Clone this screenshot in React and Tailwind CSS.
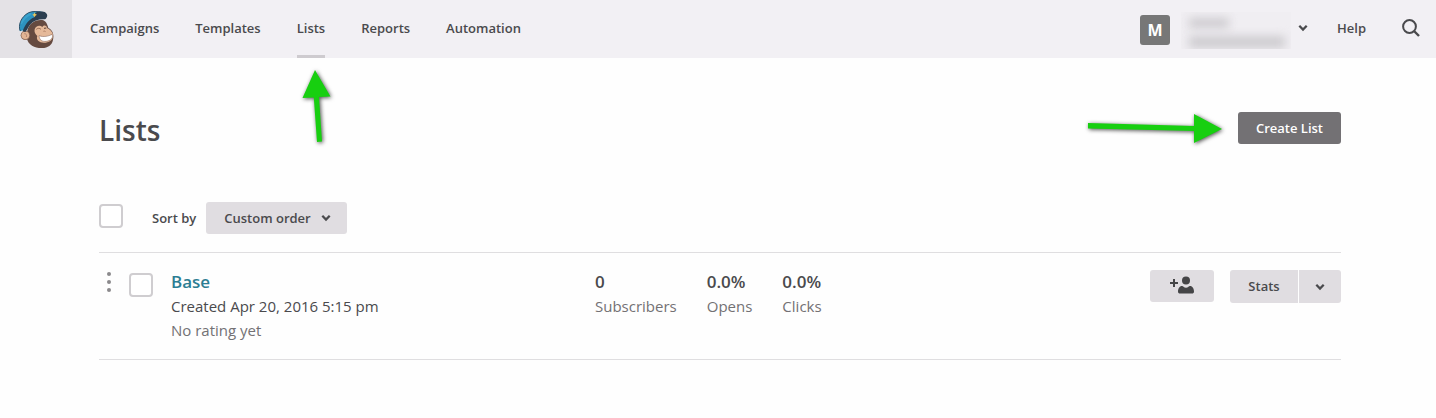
import React from "react";

const navItems = ["Campaigns", "Templates", "Lists", "Reports", "Automation"];

const stats = [
  { value: "0", label: "Subscribers" },
  { value: "0.0%", label: "Opens" },
  { value: "0.0%", label: "Clicks" },
];

function Mascot() {
  return (
    <svg viewBox="51 30 114 117" className="h-[39px] w-[38px]" aria-hidden="true">
      <path d="M82 92C86 72 104 58 126 60C138 62 142 72 145 84C158 90 163 104 159 120C156 136 142 145 124 144C104 144 84 134 81 116Z" fill="#654a40" />
      <ellipse cx="76" cy="106" rx="14" ry="14" fill="#8d6a58" />
      <ellipse cx="76" cy="106" rx="11.500" ry="11.500" fill="#e2b595" />
      <path d="M73 101C79 101 81 105 79 111" fill="none" stroke="#a87c66" strokeWidth="2.500" />
      <path d="M104 88C107 77 120 74 127 81C132 74 140 76 142 85C151 89 159 97 159 107C159 121 146 128 132 128C117 128 107 119 112 108C106 103 102 97 104 88Z" fill="#e5b999" />
      <path d="M109 88C113 84 119 84 123 88" fill="none" stroke="#8c604a" strokeWidth="2.500" />
      <path d="M132 85L139 84" fill="none" stroke="#5a3f34" strokeWidth="3" />
      <path d="M130 94C133 92 136 94 137 96" fill="none" stroke="#a87a61" strokeWidth="2.500" />
      <path d="M117 107C131 112 145 109 156 103C161 113 153 122 139 124C127 126 118 120 117 107Z" fill="#fff" stroke="#7a574a" strokeWidth="1.500" />
      <path d="M60 94C54 78 61 51 86 38C104 31 122 35 136 38L139 51C118 50 94 61 79 88Z" fill="#2b94c2" />
      <path d="M61 93C54 78 61 51 86 38C98 33 113 34 125 37" fill="none" stroke="#2c5068" strokeWidth="3" />
      <path d="M65 70C70 56 79 48 91 42" fill="none" stroke="#3ba3cd" strokeWidth="6" strokeLinecap="round" />
      <path d="M68 94C74 76 84 60 103 52C100 44 106 36 114 35C122 34 132 34 137 38C144 43 143 52 135 58C116 57 101 62 91 73C84 82 81 92 76 96Z" fill="#2b3e50" />
      <path d="M64 88C68 72 78 60 90 53" fill="none" stroke="#2e93bf" strokeWidth="8" />
      <path d="M104 37L106 42L111 44L106 47L104 52L101 47L97 44L102 42Z" fill="#e9c75c" />
    </svg>
  );
}

function Chevron({ className = "" }) {
  return (
    <svg viewBox="0 0 10 8" className={"h-2 w-2.5 " + className} aria-hidden="true">
      <path d="M1.300 1.800L5 5.500L8.700 1.800" fill="none" stroke="#4a4a4d" strokeWidth="2.300" />
    </svg>
  );
}

function AddPersonIcon() {
  return (
    <svg viewBox="0 0 24 18" className="h-[18px] w-6" fill="#454547" aria-hidden="true">
      <path d="M3 3h2v3h3v2H5v3H3V8H0V6h3z" />
      <circle cx="16" cy="4.500" r="4" />
      <path d="M8 15.500C8 12.500 9.500 10 12 10C13.500 10 14 11.800 16 11.800S18.500 10 20 10C22.500 10 24 12.500 24 15.500C24 17 23.200 17.500 22 17.500H10C8.800 17.500 8 17 8 15.500Z" />
    </svg>
  );
}

function CheckBox({ label }) {
  return (
    <input
      type="checkbox"
      aria-label={label}
      className="block size-6 shrink-0 appearance-none rounded border-2 border-[#cfcdd0] bg-white checked:bg-[#2c7d93]"
    />
  );
}

function Header() {
  return (
    <header className="flex h-[58px] items-stretch bg-[#f2f0f4]">
      <a href="#home" aria-label="Home" className="flex w-[72px] items-center justify-center bg-[#e4e2e6]">
        <Mascot />
      </a>
      <nav className="ml-[18px] flex gap-9">
        {navItems.map((item) => (
          <a
            key={item}
            href={"#" + item.toLowerCase()}
            className={
              item === "Lists"
                ? "relative flex items-center border-b-3 border-[#cecbcf] pt-px"
                : "flex items-center border-b-3 border-transparent pt-px"
            }
          >
            {item}
            {item === "Lists" && (
              <svg
                viewBox="0 0 40 80"
                className="absolute top-[67px] left-0 h-20 w-10 drop-shadow-[1px_1px_2px_rgba(0,0,0,0.7)]"
                aria-hidden="true"
              >
                <path d="M18 3L33.500 29.500L22 30L25 74.500L20 75L16.800 30.500L5.500 31Z" fill="#17cf10" />
              </svg>
            )}
          </a>
        ))}
      </nav>
      <div className="ml-auto flex items-center pr-4">
        <button type="button" aria-label="Account" className="flex items-center pt-0.5">
          <span className="flex size-[30px] items-center justify-center rounded-[3px] bg-[#777777] text-base font-bold text-white">
            M
          </span>
          <span className="ml-[11px] flex h-[37px] w-[110px] flex-col gap-2 overflow-hidden bg-[#f0eef2] pt-1.5 pl-2">
            <span className="h-2.5 w-10 bg-[#cdcbcf] blur-[5px]" />
            <span className="h-3 w-24 bg-[#cdcbcf] blur-[5px]" />
          </span>
          <Chevron className="mb-1 ml-[7px]" />
        </button>
        <a href="#help" className="ml-[29px] pb-0.5">Help</a>
        <button type="button" aria-label="Search" className="ml-9 pb-0.5">
          <svg viewBox="0 0 18 18" className="size-[18px]" fill="none" stroke="#4a4a4d" aria-hidden="true">
            <circle cx="7.500" cy="7.500" r="6.400" strokeWidth="2" />
            <path d="M12 12L17 17" strokeWidth="2.400" />
          </svg>
        </button>
      </div>
    </header>
  );
}

export default function App() {
  return (
    <div className="min-h-screen bg-[#fefefe] font-['Open_Sans',sans-serif] text-[13px] leading-5 font-semibold text-[#4a4a4d]">
      <Header />
      <main className="pt-[52px] pr-[95px] pl-[99px]">
        <div className="flex items-start justify-between">
          <h1 className="text-[28px] leading-10 font-semibold">Lists</h1>
          <div className="relative mt-0.5">
            <button type="button" className="h-8 rounded-[3px] bg-[#737174] px-[18px] text-white">
              Create List
            </button>
            <svg
              viewBox="0 0 140 40"
              className="absolute top-[-3px] right-[116px] h-10 w-[140px] drop-shadow-[1px_1px_2px_rgba(0,0,0,0.7)]"
              aria-hidden="true"
            >
              <path d="M3 14L109 17V5L137 20L109 34V22L3 19.500Z" fill="#17cf10" />
            </svg>
          </div>
        </div>

        <div className="mt-[52px] flex items-start">
          <div className="pt-0.5">
            <CheckBox label="Select all lists" />
          </div>
          <label htmlFor="sort" className="ml-[29px] leading-8">Sort by</label>
          <div className="ml-[10px] grid items-center">
            <select
              id="sort"
              defaultValue="custom"
              className="col-start-1 row-start-1 h-8 appearance-none rounded-[3px] bg-[#e0dde1] pr-9 pl-[18px]"
            >
              <option value="custom">Custom order</option>
            </select>
            <Chevron className="pointer-events-none col-start-1 row-start-1 mr-4 justify-self-end" />
          </div>
        </div>

        <section className="mt-[18px] flex items-start border-y border-[#dfdee0] py-[17px] text-[15px] leading-6 font-normal">
          <svg viewBox="0 0 4 20" className="mt-0.5 ml-2 h-5 w-1" fill="#8b898c" aria-hidden="true">
            <circle cx="2" cy="2" r="2" />
            <circle cx="2" cy="10" r="2" />
            <circle cx="2" cy="18" r="2" />
          </svg>
          <div className="mt-[3px] ml-[18px]">
            <CheckBox label="Select Base" />
          </div>
          <div className="ml-[18px] w-[424px]">
            <h2 className="text-[17px] leading-6 font-semibold">
              <a href="#base" className="text-[#2c7d93]">Base</a>
            </h2>
            <p>Created Apr 20, 2016 5:15 pm</p>
            <p className="text-[#737174]">No rating yet</p>
          </div>
          <dl className="flex gap-[30px]">
            {stats.map((s) => (
              <div key={s.label} className="flex flex-col-reverse">
                <dt className="text-[#737174]">{s.label}</dt>
                <dd className="text-[17px] leading-6 font-semibold">{s.value}</dd>
              </div>
            ))}
          </dl>
          <div className="ml-auto flex gap-4 text-[13px] font-semibold">
            <button
              type="button"
              aria-label="Add subscribers"
              className="flex h-8 w-16 items-center justify-center rounded-[3px] bg-[#e0dde1] pb-0.5"
            >
              <AddPersonIcon />
            </button>
            <div className="flex gap-px">
              <button type="button" className="h-[33px] w-[68px] rounded-l-[3px] bg-[#e0dde1] pb-px">
                Stats
              </button>
              <button
                type="button"
                aria-label="More actions"
                className="flex h-[33px] w-[42px] items-center justify-center rounded-r-[3px] bg-[#e0dde1]"
              >
                <Chevron />
              </button>
            </div>
          </div>
        </section>
      </main>
    </div>
  );
}
